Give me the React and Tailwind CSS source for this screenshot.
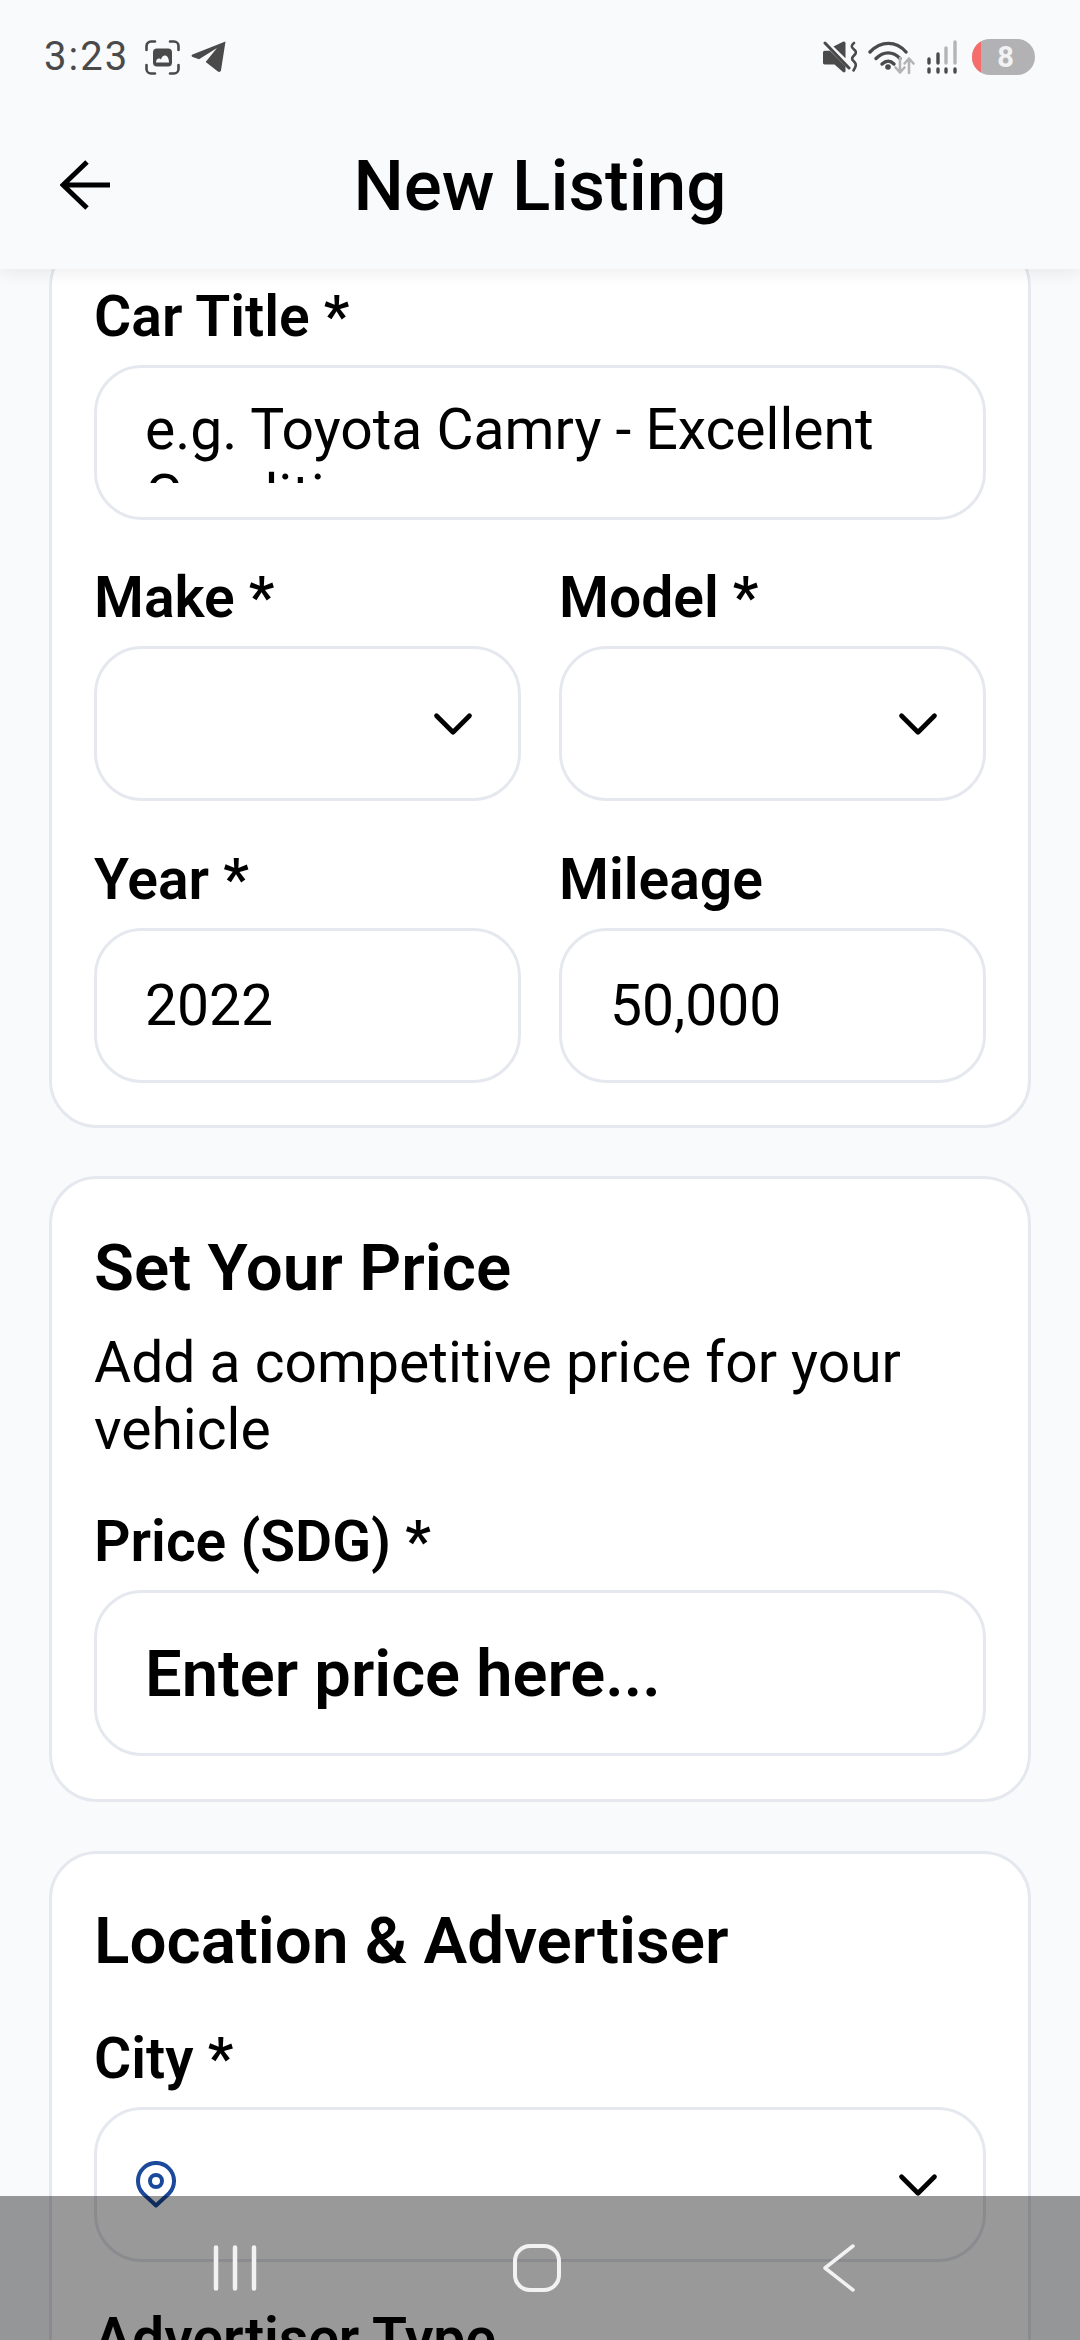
import { ChevronDown } from 'lucide-react'

const labelClass = 'block h-[63px] mb-[17px] text-[57px] leading-[63px] font-semibold text-black whitespace-nowrap'
const fieldClass = 'h-[155px] rounded-[48px] border-[3px] border-[#e5e8ee] bg-transparent flex items-center px-[48px] text-[57px] text-black'
const cardClass = 'mx-[49px] rounded-[48px] border-[3px] border-[#e5e8ee] bg-white px-[42px]'

function ScreenshotIcon() {
  return (
    <svg viewBox="0 0 35 35" className="w-[35px] h-[35px]" fill="none">
      <path d="M1.5 10V6a4.5 4.5 0 0 1 4.5-4.5h4M25 1.5h4A4.5 4.5 0 0 1 33.500 6v4M33.500 25v4a4.500 4.500 0 0 1-4.500 4.500h-4M10 33.500H6A4.500 4.500 0 0 1 1.500 29v-4" stroke="#4a4a4a" strokeWidth="2.600" strokeLinecap="round" />
      <rect x="8" y="8.500" width="19" height="18" rx="4" fill="#4a4a4a" />
      <path d="M11 22.500c0-2.500 1.500-4 3-4 1 0 1.500.5 2 1 .8-2.500 2-4 4-4s4 2.500 4 7z" fill="#f9fafc" />
    </svg>
  )
}

function TelegramIcon() {
  return (
    <svg viewBox="0 0 35 32" className="w-[35px] h-[32px] ml-[11px]">
      <path d="M34.500 0.500 1.500 13.500c-1.300.6-1.200 2.200.2 2.600l6.300 2.100L26 7 15 20.500l-.3.500 12.200 9.500c1.300.8 2.800.3 3.100-1.200z" fill="#4a4a4a" />
    </svg>
  )
}

function MuteIcon() {
  return (
    <svg viewBox="0 0 35 32" className="w-[35px] h-[32px]" fill="none">
      <path d="M1 11.500c0-1 .7-1.700 1.700-1.700H8l15.500 15.500v4.500c0 1.500-1.500 2-2.500 1.200l-8.500-7.500H2.700C1.700 23.500 1 22.800 1 21.800z" fill="#4a4a4a" />
      <path d="M11.500 5.500 21 .8c1.300-.6 2.500.2 2.500 1.500v15z" fill="#4a4a4a" />
      <path d="M3 2l24 25" stroke="#4a4a4a" strokeWidth="3" strokeLinecap="round" />
      <path d="M32 2c-3 2.500-3 4 0 6.500 2.500 2 2.500 3.500 0 6-2.500 2.500-2.500 4 0 6 2.500 2.500 2.500 4-.5 9" stroke="#4a4a4a" strokeWidth="2.600" strokeLinecap="round" />
    </svg>
  )
}

function WifiIcon() {
  return (
    <svg viewBox="0 0 48 36" className="w-[48px] h-[36px] ml-[11px]" fill="none">
      <path d="M2 13C13 1.500 28 1.500 38 13" stroke="#4a4a4a" strokeWidth="3.400" strokeLinecap="round" />
      <path d="M8 19.500c7.500-7.500 17-7.500 24 0" stroke="#4a4a4a" strokeWidth="3.400" strokeLinecap="round" />
      <path d="M14 25c4.500-4 8-4 12 0" stroke="#4a4a4a" strokeWidth="3.400" strokeLinecap="round" />
      <circle cx="20" cy="28" r="2.800" fill="#4a4a4a" />
      <path d="M32 19v14M27.500 28.500 32 33.500l4.500-5M41 34V20M36.500 24.500 41 19.500l4.500 5" stroke="#b4b4b6" strokeWidth="2.600" strokeLinecap="round" strokeLinejoin="round" />
    </svg>
  )
}

function SignalIcon() {
  const dots = [3, 12, 20, 29]
  return (
    <svg viewBox="0 0 32 34" className="w-[32px] h-[34px] ml-[10px]" fill="none" strokeLinecap="round" strokeWidth="3.400">
      <path d="M3 19v4M12 14v9" stroke="#4a4a4a" />
      <path d="M20 8v15M29 2v21" stroke="#b4b4b6" />
      {dots.map(x => <path key={x} d={`M${x} 29v3`} stroke="#4a4a4a" />)}
    </svg>
  )
}

function Field({ children, className = '' }) {
  return <div className={`${fieldClass} ${className}`}>{children}</div>
}

function SelectField({ children }) {
  return (
    <Field className="justify-between pl-[39px] pr-[32px]">
      <span className="flex items-center">{children}</span>
      <ChevronDown strokeWidth={1.700} className="w-[66px] h-[66px] text-black" />
    </Field>
  )
}

export default function App() {
  return (
    <div className="relative w-[1080px] h-[2340px] overflow-hidden flex flex-col bg-[#f9fafc]" style={{ fontFamily: 'Roboto, sans-serif' }}>
      {/* Status bar + title */}
      <header className="relative z-10 shrink-0 h-[269px] bg-[#f9fafc] shadow-[0_6px_14px_rgba(0,0,0,0.06)]">
        <div className="h-[114px] flex items-center justify-between pl-[44px] pr-[45px]">
          <div className="flex items-center">
            <span className="text-[40px] leading-none tracking-[2px] text-[#4a4a4a] mr-[16px]">3:23</span>
            <ScreenshotIcon />
            <TelegramIcon />
          </div>
          <div className="flex items-center">
            <MuteIcon />
            <WifiIcon />
            <SignalIcon />
            <div className="relative ml-[14px] w-[63px] h-[36px] rounded-full overflow-hidden bg-[#b2b2b5] flex items-center justify-center">
              <span className="absolute left-0 inset-y-0 w-[9px] bg-[#f56d6a]" />
              <span className="pl-[4px] text-[29px] leading-none font-bold text-[#f2f2f2]">8</span>
            </div>
          </div>
        </div>
        <div className="relative h-[142px] flex items-center justify-center">
          <svg viewBox="0 0 50 50" className="absolute left-[60px] top-[46px] w-[50px] h-[50px]" fill="none" stroke="#000" strokeWidth="5">
            <path d="M50 25H3M27 2 3 25l24 23" />
          </svg>
          <h1 className="text-[71px] leading-none font-medium text-black mt-[1px]">New Listing</h1>
        </div>
      </header>

      <main className="flex-1 min-h-0 overflow-hidden">
        <div className="-mt-[31px]">
          {/* Car details, scrolled partly under the header */}
          <section className={`${cardClass} pt-[44px] pb-[42px]`}>
            <label className={labelClass}>Car Title *</label>
            <Field className="items-start pt-[29px]">
              <div className="h-[86px] overflow-hidden leading-[66px] whitespace-normal w-[760px]">e.g. Toyota Camry - Excellent Condition</div>
            </Field>
            <div className="grid grid-cols-2 gap-x-[38px] gap-y-[47px] mt-[46px]">
              <div>
                <label className={labelClass}>Make *</label>
                <SelectField />
              </div>
              <div>
                <label className={labelClass}>Model *</label>
                <SelectField />
              </div>
              <div>
                <label className={labelClass}>Year *</label>
                <Field>2022</Field>
              </div>
              <div>
                <label className={labelClass}>Mileage</label>
                <Field>50,000</Field>
              </div>
            </div>
          </section>

          <section className={`${cardClass} mt-[48px] pt-[47px] pb-[43px]`}>
            <h2 className="text-[65.500px] leading-[84px] font-semibold text-black">Set Your Price</h2>
            <p className="mt-[19px] text-[57px] leading-[67px] text-black">Add a competitive price for your vehicle</p>
            <label className={`${labelClass} mt-[47px]`}>Price (SDG) *</label>
            <Field className="h-[166px] pt-[3px] text-[65px] font-semibold">Enter price here...</Field>
          </section>

          <section className={`${cardClass} mt-[49px] pt-[45px] pb-[41px]`}>
            <h2 className="text-[65.500px] leading-[84px] font-semibold text-black">Location &amp; Advertiser</h2>
            <label className={`${labelClass} mt-[44px]`}>City *</label>
            <SelectField>
              <svg viewBox="0 0 40 47" className="w-[40px] h-[47px]" fill="none" stroke="#1b4a9c" strokeWidth="4">
                <path d="M20 44.500 6.800 32.200a18 18 0 1 1 26.400 0z" strokeLinejoin="round" />
                <circle cx="20" cy="20" r="6" />
              </svg>
            </SelectField>
            <label className={`${labelClass} mt-[45px]`}>Advertiser Type</label>
          </section>
        </div>
      </main>

      {/* Android nav bar, translucent over the page */}
      <nav className="absolute inset-x-0 bottom-0 h-[144px] bg-black/40 flex items-center pl-[84px]">
        <div className="w-[302px] flex justify-center">
          <svg viewBox="0 0 46 46" className="w-[46px] h-[46px]" fill="none" stroke="#f2f2f2" strokeWidth="4.500" strokeLinecap="round">
            <path d="M4 2.500v41M23 2.500v41M42 2.500v41" />
          </svg>
        </div>
        <div className="w-[302px] flex justify-center">
          <div className="w-[48px] h-[48px] rounded-[17px] border-[4px] border-[#f2f2f2]" />
        </div>
        <div className="w-[302px] flex justify-center">
          <svg viewBox="0 0 34 48" className="w-[34px] h-[48px]" fill="none" stroke="#f2f2f2" strokeWidth="3.500" strokeLinecap="round" strokeLinejoin="round">
            <path d="M31 2 3 24l28 22" />
          </svg>
        </div>
      </nav>
    </div>
  )
}
